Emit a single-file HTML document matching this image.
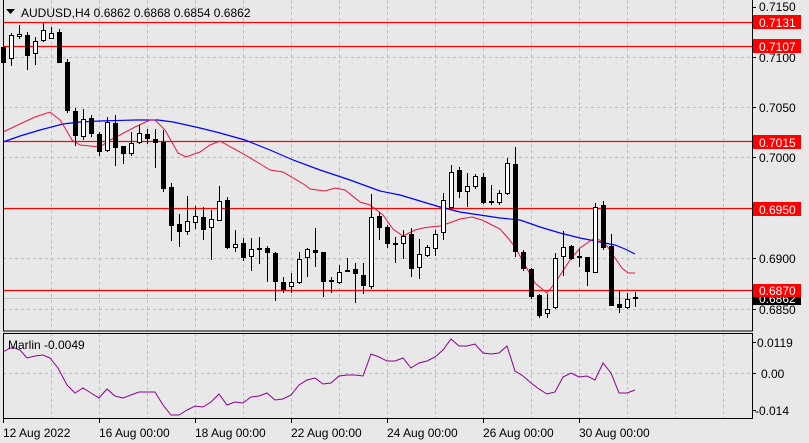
<!DOCTYPE html>
<html><head><meta charset="utf-8"><style>
html,body{margin:0;padding:0;background:#e8e8e8;width:809px;height:443px;overflow:hidden}
svg{display:block}
text{font-family:"Liberation Sans",sans-serif;font-size:12px;fill:#000}
</style></head><body>
<svg width="809" height="443" viewBox="0 0 809 443" xmlns="http://www.w3.org/2000/svg">
<rect width="809" height="443" fill="#e8e8e8"/>
<g stroke="#bcbcbc" stroke-dasharray="3,3" stroke-width="1">
<path d="M51.5 0V331M99.5 0V331M147.5 0V331M195.5 0V331M243.5 0V331M291.5 0V331M339.5 0V331M387.5 0V331M435.5 0V331M483.5 0V331M531.5 0V331M579.5 0V331M627.5 0V331M675.5 0V331M723.5 0V331"/>
<path d="M51.5 333V418M99.5 333V418M147.5 333V418M195.5 333V418M243.5 333V418M291.5 333V418M339.5 333V418M387.5 333V418M435.5 333V418M483.5 333V418M531.5 333V418M579.5 333V418M627.5 333V418M675.5 333V418M723.5 333V418"/>
<path d="M3 57.5H752M3 107.5H752M3 157.5H752M3 258.5H752M3 309.5H752M3 373.5H752"/>
</g>
<path d="M3 298.5H752" stroke="#c4c4c4" stroke-width="1"/>
<g stroke="#ff0000" stroke-width="1.3">
<path d="M3 22.5H752M3 46.5H752M3 141.5H752M3 208.5H752M3 290.5H752"/>
</g>
<polyline fill="none" stroke="#0000ff" stroke-width="1.2" points="3,142 20,136 40,130 63,124 80,122 100,121 135,120 158,120 173,122 200,128 220,133 245,140 270,150 293,160 320,170 350,180 380,191 400,195 420,201 440,207 460,212 480,215 500,218 520,220 540,227 560,233 580,238 600,242 615,245 625,249 635,254"/>
<polyline fill="none" stroke="#e8163c" stroke-width="1" points="3,132 20,124 35,117 50,112 60,120 65,128 72,140 80,145 100,147 110,140 120,135 135,127 150,120 155,120 165,130 178,153 186,157 200,152 210,145 220,141 240,152 262,165 270,170 283,172 305,185 310,189 325,191 335,188 345,190 360,202 370,205 383,215 393,229 403,236 415,230 423,228 430,227 440,226 452,222 460,219 472,217 482,220 492,225 500,229 508,238 515,247 525,265 535,283 547,293 555,283 570,260 580,248 593,239 600,240 607,246 615,258 622,268 628,273 635,273"/>
<path stroke="#000" stroke-width="1" fill="none" d="M3.5 43V65M11.5 33V66M19.5 25V39M27.5 32V70M35.5 37V65M43.5 23V42M51.5 27V39M59.5 29V63M67.5 59V113M75.5 108V146M83.5 109V140M91.5 115V137M99.5 132V156M107.5 117V152M115.5 115V166M123.5 146V164M131.5 132V156M139.5 125V144M147.5 129V144M155.5 129V168M163.5 130V192M171.5 183V241M179.5 214V247M187.5 196V235M195.5 206V229M203.5 207V240M211.5 210V260M219.5 186V221M227.5 197V249M235.5 230V252M243.5 238V261M251.5 238V271M259.5 237V264M267.5 246V282M275.5 252V301M283.5 277V293M291.5 273V293M299.5 252V284M307.5 248V277M315.5 228V267M323.5 252V297M331.5 277V293M339.5 265V284M347.5 258V272M355.5 263V303M363.5 263V294M371.5 194V289M379.5 212V240M387.5 225V248M395.5 237V263M403.5 230V259M411.5 228V277M419.5 239V279M427.5 245V257M435.5 230V256M443.5 193V240M451.5 165V210M459.5 167V198M467.5 173V207M475.5 174V189M483.5 173V204M491.5 185V205M499.5 190V205M507.5 158V195M515.5 147V257M523.5 250V271M531.5 268V299M539.5 294V318M547.5 294V318M555.5 253V309M563.5 231V276M571.5 245V260M579.5 249V267M587.5 257V286M595.5 203V273M603.5 201V250M611.5 234V306M619.5 291V313M627.5 293V309M635.5 292V307"/>
<g fill="#000">
<rect x="1" y="47" width="5" height="16"/><rect x="25" y="35" width="5" height="21"/><rect x="57" y="32" width="5" height="31"/><rect x="65" y="62" width="5" height="49"/><rect x="73" y="111" width="5" height="25"/><rect x="89" y="118" width="5" height="16"/><rect x="97" y="134" width="5" height="18"/><rect x="113" y="123" width="5" height="25"/><rect x="121" y="146" width="5" height="8"/><rect x="145" y="134" width="5" height="5"/><rect x="153" y="139" width="5" height="4"/><rect x="161" y="142" width="5" height="47"/><rect x="169" y="187" width="5" height="39"/><rect x="177" y="224" width="5" height="8"/><rect x="201" y="217" width="5" height="13"/><rect x="225" y="200" width="5" height="48"/><rect x="241" y="243" width="5" height="15"/><rect x="257" y="248" width="5" height="2"/><rect x="265" y="248" width="5" height="5"/><rect x="273" y="253" width="5" height="29"/><rect x="281" y="282" width="5" height="8"/><rect x="313" y="250" width="5" height="3"/><rect x="321" y="252" width="5" height="30"/><rect x="329" y="280" width="5" height="2"/><rect x="345" y="270" width="5" height="2"/><rect x="353" y="269" width="5" height="5"/><rect x="361" y="275" width="5" height="11"/><rect x="377" y="216" width="5" height="12"/><rect x="385" y="227" width="5" height="17"/><rect x="393" y="243" width="5" height="2"/><rect x="409" y="234" width="5" height="35"/><rect x="457" y="170" width="5" height="22"/><rect x="481" y="177" width="5" height="26"/><rect x="513" y="164" width="5" height="88"/><rect x="521" y="252" width="5" height="17"/><rect x="529" y="269" width="5" height="28"/><rect x="537" y="295" width="5" height="21"/><rect x="569" y="246" width="5" height="13"/><rect x="577" y="256" width="5" height="2"/><rect x="585" y="257" width="5" height="15"/><rect x="601" y="205" width="5" height="43"/><rect x="609" y="246" width="5" height="60"/><rect x="617" y="304" width="5" height="4"/><rect x="633" y="297" width="5" height="2"/>
</g>
<g fill="#fff" stroke="#000" stroke-width="1">
<rect x="9.5" y="35.5" width="4" height="23"/><rect x="17.5" y="34.5" width="4" height="2"/><rect x="33.5" y="41.5" width="4" height="12"/><rect x="41.5" y="30.5" width="4" height="10"/><rect x="49.5" y="33.5" width="4" height="5"/><rect x="81.5" y="119.5" width="4" height="17"/><rect x="105.5" y="122.5" width="4" height="28"/><rect x="129.5" y="143.5" width="4" height="10"/><rect x="137.5" y="133.5" width="4" height="9"/><rect x="185.5" y="221.5" width="4" height="10"/><rect x="193.5" y="216.5" width="4" height="6"/><rect x="209.5" y="219.5" width="4" height="8"/><rect x="217.5" y="201.5" width="4" height="19"/><rect x="233.5" y="244.5" width="4" height="3"/><rect x="249.5" y="249.5" width="4" height="7"/><rect x="289.5" y="282.5" width="4" height="4"/><rect x="297.5" y="259.5" width="4" height="23"/><rect x="305.5" y="249.5" width="4" height="8"/><rect x="337.5" y="272.5" width="4" height="10"/><rect x="369.5" y="217.5" width="4" height="69"/><rect x="401.5" y="236.5" width="4" height="7"/><rect x="417.5" y="254.5" width="4" height="13"/><rect x="425.5" y="247.5" width="4" height="8"/><rect x="433.5" y="234.5" width="4" height="14"/><rect x="441.5" y="200.5" width="4" height="32"/><rect x="449.5" y="172.5" width="4" height="35"/><rect x="465.5" y="186.5" width="4" height="5"/><rect x="473.5" y="176.5" width="4" height="10"/><rect x="489.5" y="201.5" width="4" height="1"/><rect x="497.5" y="193.5" width="4" height="9"/><rect x="505.5" y="163.5" width="4" height="30"/><rect x="545.5" y="309.5" width="4" height="4"/><rect x="553.5" y="258.5" width="4" height="49"/><rect x="561.5" y="247.5" width="4" height="9"/><rect x="593.5" y="207.5" width="4" height="65"/><rect x="625.5" y="299.5" width="4" height="8"/>
</g>
<polyline fill="none" stroke="#8b008b" stroke-width="1" points="3,352 10,348 15,348 20,350 27,358 35,356 43,355 50,358 58,368 67,385 75,393 83,388 91,393 99,398 107,389 115,396 123,398 131,395 139,392 147,392 155,392 163,405 171,415 179,415 187,410 195,406 203,407 211,402 219,394 227,405 235,402 243,403 251,397 259,396 267,393 275,400 283,399 291,395 299,385 307,380 315,378 323,384 331,383 339,376 347,375 355,375 363,376 371,354 379,357 387,361 395,361 403,358 411,368 419,363 427,361 435,357 443,350 451,339 459,346 467,346 475,344 483,353 491,354 499,353 507,346 515,371 523,376 531,383 539,389 547,394 555,392 563,377 571,373 579,377 587,376 595,380 603,363 611,373 619,393 627,393 635,390"/>
<g fill="none" stroke="#000" stroke-width="1">
<rect x="3.5" y="-1" width="749" height="332"/>
<rect x="3.5" y="333.5" width="749" height="85"/>
<path d="M752 7.5h4M752 57.5h4M752 107.5h4M752 157.5h4M752 258.5h4M752 309.5h4M752 342.5h4M752 373.5h4M752 410.5h4"/>
<path d="M3.5 418v5M99.5 418v5M195.5 418v5M291.5 418v5M387.5 418v5M483.5 418v5M579.5 418v5"/>
</g>
<path d="M6 9h9l-4.5 5z" fill="#000"/>
<text x="21" y="17" font-size="12.6">AUDUSD,H4  0.6862 0.6868 0.6854 0.6862</text>
<text x="8" y="349" font-size="11.8">Marlin -0.0049</text>
<g font-size="12.4">
<text x="759" y="11">0.7150</text>
<text x="759" y="62">0.7100</text>
<text x="759" y="112">0.7050</text>
<text x="759" y="162">0.7000</text>
<text x="759" y="263">0.6900</text>
<text x="759" y="314">0.6850</text>
<text x="757" y="347">0.0119</text>
<text x="761" y="378">0.00</text>
<text x="755" y="415">-0.014</text>
</g>
<rect x="753" y="292" width="48" height="13" fill="#000"/>
<text x="759" y="303" font-size="12.4" style="fill:#fff">0.6862</text>
<g fill="#ff0000">
<rect x="753" y="15" width="48" height="14"/>
<rect x="753" y="39" width="48" height="14"/>
<rect x="753" y="135" width="48" height="14"/>
<rect x="753" y="202" width="48" height="14"/>
<rect x="753" y="284" width="48" height="13"/>
</g>
<g font-size="12.4">
<text x="759" y="27" style="fill:#fff">0.7131</text>
<text x="759" y="51" style="fill:#fff">0.7107</text>
<text x="759" y="147" style="fill:#fff">0.7015</text>
<text x="759" y="214" style="fill:#fff">0.6950</text>
<text x="759" y="295" style="fill:#fff">0.6870</text>
</g>
<g font-size="12.6">
<text x="3" y="437">12 Aug 2022</text>
<text x="99" y="437">16 Aug 00:00</text>
<text x="195" y="437">18 Aug 00:00</text>
<text x="291" y="437">22 Aug 00:00</text>
<text x="387" y="437">24 Aug 00:00</text>
<text x="483" y="437">26 Aug 00:00</text>
<text x="579" y="437">30 Aug 00:00</text>
</g>
</svg>
</body></html>
